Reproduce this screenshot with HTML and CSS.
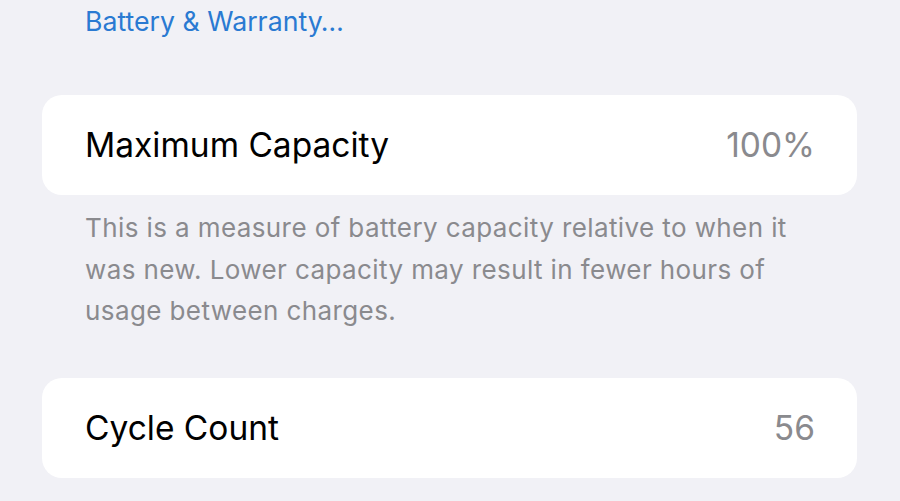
FILE: index.html
```html
<!DOCTYPE html>
<html lang="en">
<head>
    <meta charset="UTF-8">
    <title>Battery Health</title>
    <link rel="stylesheet" href="styles.css">
</head>
<body>
    <div class="page">
        <a href="#" class="link">Battery &amp; Warranty…</a>

        <div class="group">
            <div class="row">
                <span class="label">Maximum Capacity</span>
                <span class="value">100%</span>
            </div>
        </div>
        <p class="footer">This is a measure of battery capacity relative to when it was new. Lower capacity may result in fewer hours of usage between charges.</p>

        <div class="group">
            <div class="row">
                <span class="label">Cycle Count</span>
                <span class="value">56</span>
            </div>
        </div>
    </div>
</body>
</html>
```

FILE: styles.css
```css
body {
    background-color: #f1f1f6;
    color: #000;
    font-family: Inter, "Noto Sans", sans-serif;
    margin: 0;
    padding: 0;
}

.page {
    display: flex;
    flex-direction: column;
    padding: 0 43px 0 42px;
}

.link {
    color: #2a7ad2;
    font-size: 26.7px;
    line-height: 42px;
    text-decoration: none;
    padding-left: 43px;
    margin-bottom: 53px;
}

.group {
    background-color: #fff;
    border-radius: 20px;
}

.row {
    display: flex;
    justify-content: space-between;
    align-items: center;
    height: 100px;
    padding: 0 42px 0 43px;
}

.label {
    font-size: 33.5px;
}

.value {
    font-size: 33.5px;
    color: #8a8a8e;
}

.footer {
    color: #8a8a8e;
    font-size: 26px;
    letter-spacing: 0.4px;
    line-height: 41.5px;
    margin: 12px 0 46px 0;
    padding: 0 43px;
}
```
